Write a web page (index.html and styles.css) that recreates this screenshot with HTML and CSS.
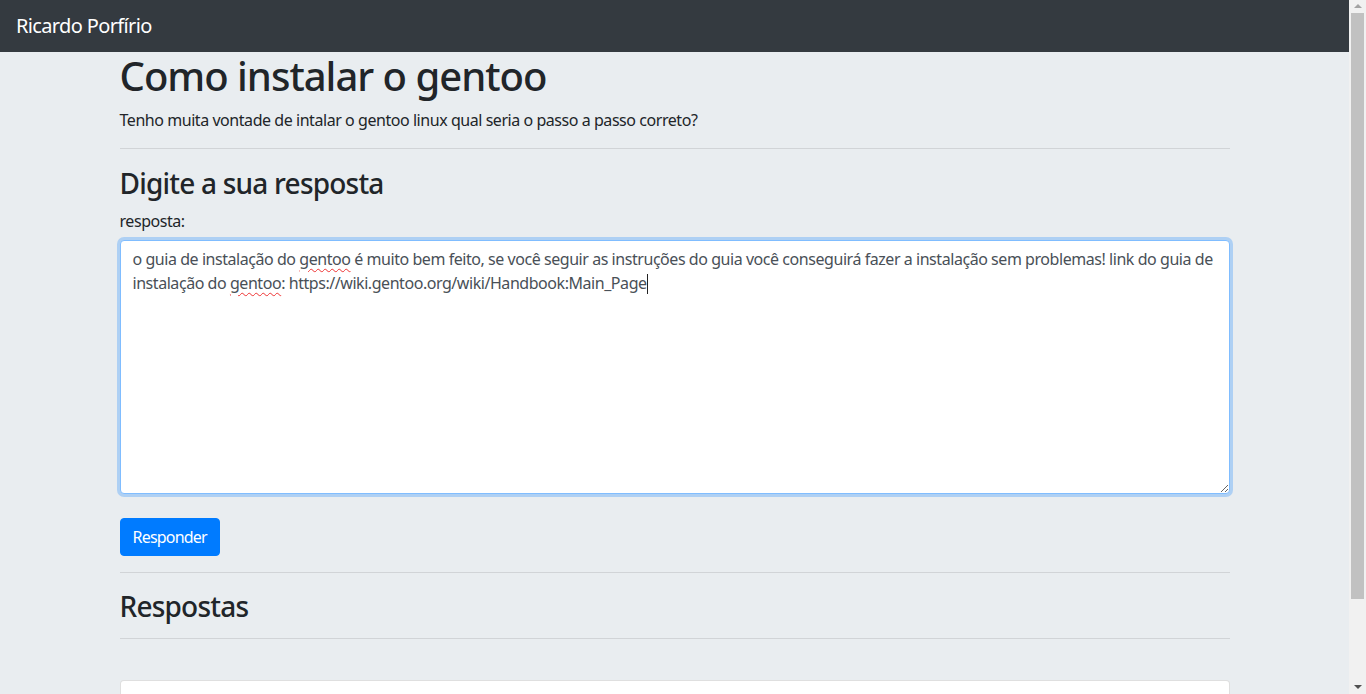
FILE: index.html
```html
<!DOCTYPE html>
<html lang="pt">
<head>
<meta charset="utf-8">
<title>Como instalar o gentoo</title>
<link rel="stylesheet" href="styles.css">
</head>
<body>
<div class="page">
  <nav class="navbar">
    <span class="brand">Ricardo Porfírio</span>
  </nav>
  <main class="container">
    <h1 class="title">Como instalar o gentoo</h1>
    <p class="lead-text">Tenho muita vontade de intalar o gentoo linux qual seria o passo a passo correto?</p>
    <hr class="divider">
    <h3 class="section-title section-title--form">Digite a sua resposta</h3>
    <form class="answer-form">
      <div class="form-group">
        <label class="field-label">resposta:</label>
        <div class="textarea" contenteditable="true" spellcheck="false">o guia de instalação do <span class="misspelled">gentoo</span> é muito bem feito, se você seguir as instruções do guia você conseguirá fazer a instalação sem problemas! link do guia de<br>instalação do <span class="misspelled">gentoo</span>: https://wiki.gentoo.org/wiki/Handbook:Main_Page<span class="caret"></span></div>
      </div>
      <button type="button" class="btn-primary">Responder</button>
    </form>
    <hr class="divider">
    <h3 class="section-title section-title--list">Respostas</h3>
    <hr class="divider">
    <div class="card">
      <div class="card-body"></div>
    </div>
  </main>
</div>
<div class="scrollbar" aria-hidden="true">
  <span class="sb-arrow sb-up"></span>
  <span class="sb-thumb"></span>
  <span class="sb-space"></span>
  <span class="sb-arrow sb-down"></span>
</div>
</body>
</html>
```
FILE: styles.css
```css
html, body { height: 100%; overflow: hidden; }
body {
  margin: 0;
  background: #e9edf0;
  color: #212529;
  font-family: "Noto Sans", "Open Sans", sans-serif;
  font-size: 16px;
  line-height: 1.5;
  letter-spacing: -0.028em;
}
.page {
  margin-right: 17px;
}
.navbar {
  background: #343a40;
  height: 52px;
  display: flex;
  align-items: center;
  padding: 0 16px;
}
.brand {
  color: #fff;
  font-size: 20px;
  line-height: 30px;
  letter-spacing: -0.032em;
}
.container {
  max-width: 1110px;
  margin: 0 auto;
  padding: 0 15px;
}
.title {
  font-size: 40px;
  font-weight: 500;
  line-height: 1.2;
  margin: 0 0 8px;
  letter-spacing: -0.025em;
}
.lead-text {
  margin: 0 0 16px;
}
.divider {
  border: 0;
  border-top: 1px solid rgba(0,0,0,.1);
  margin: 16px 0;
}
.section-title {
  font-size: 28px;
  font-weight: 500;
  line-height: 1.2;
  margin: 0 0 8px;
  letter-spacing: -0.028em;
}
.section-title--form {
  padding-top: 2px;
}
.section-title--list {
  position: relative;
  top: 1px;
}
.form-group { margin-bottom: 24px; }
.field-label {
  display: block;
  margin-bottom: 7px;
}
.textarea {
  background: #fff;
  border: 1px solid #80bdff;
  border-radius: 4px;
  box-shadow: 0 0 0 3px rgba(0,123,255,.25);
  color: #495057;
  padding: 6px 12px;
  height: 240px;
  white-space: nowrap;
  overflow: hidden;
  resize: vertical;
  outline: none;
}
.misspelled {
  text-decoration: underline wavy #e33;
  text-decoration-thickness: 1px;
  text-underline-offset: 3px;
}
.caret {
  display: inline-block;
  width: 1px;
  height: 20px;
  background: #222;
  vertical-align: -5px;
}
.btn-primary {
  background: #007bff;
  border: 1px solid #007bff;
  border-radius: 4px;
  color: #fff;
  font: inherit;
  letter-spacing: -0.05em;
  line-height: 24px;
  padding: 6px 12px;
}
.card {
  margin-top: 41px;
  background: #fff;
  border: 1px solid rgba(0,0,0,.125);
  border-radius: 4px;
}
.card-body { height: 100px; }

.scrollbar {
  position: fixed;
  top: 0;
  right: 0;
  bottom: 0;
  width: 17px;
  background: #f1f1f1;
  display: flex;
  flex-direction: column;
  align-items: center;
}
.sb-arrow {
  width: 0;
  height: 0;
  border-left: 4px solid transparent;
  border-right: 4px solid transparent;
  margin: 4px 0;
}
.sb-up { border-bottom: 4px solid #a3a3a3; margin-bottom: 5px; }
.sb-down { border-top: 4px solid #505050; margin-bottom: 5px; }
.sb-thumb {
  width: 13px;
  height: 586px;
  background: #c1c1c1;
}
.sb-space { flex: 1; }
```
